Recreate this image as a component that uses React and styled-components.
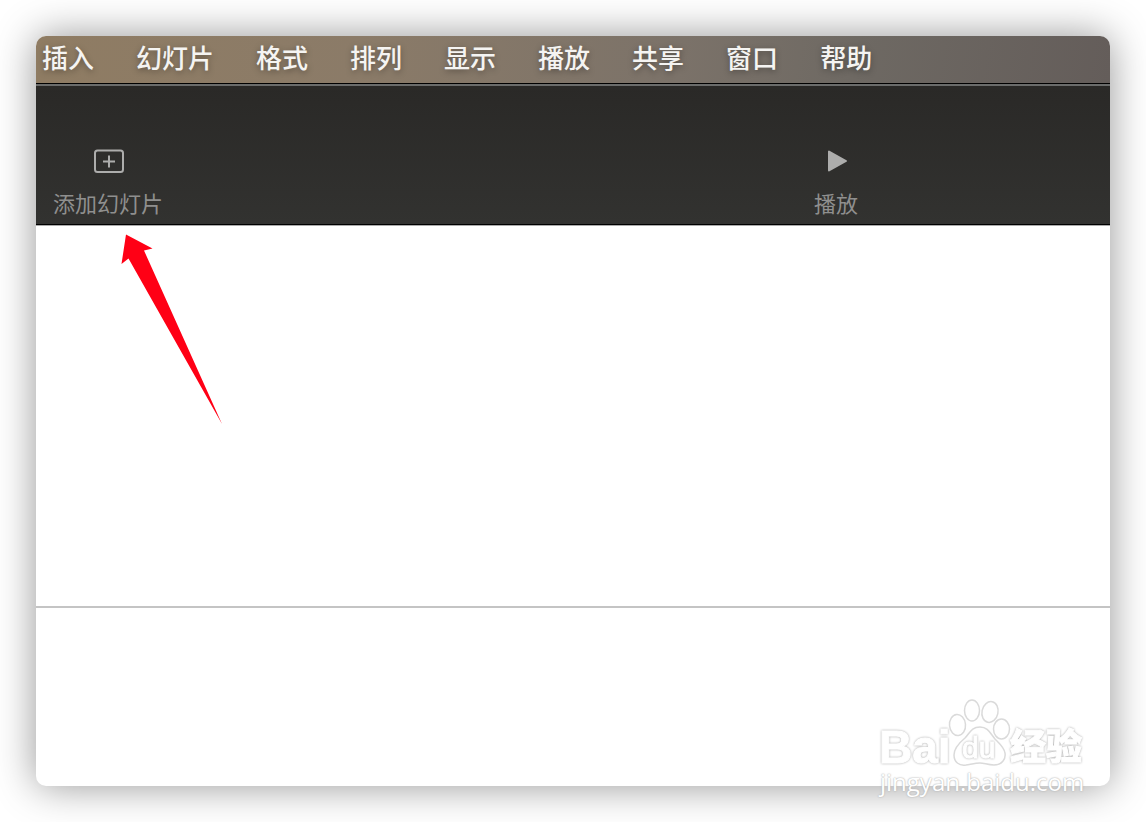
import React from "react";
import styled, { createGlobalStyle } from "styled-components";

const menus = ["插入", "幻灯片", "格式", "排列", "显示", "播放", "共享", "窗口", "帮助"];

const AddSlideIcon = () => (
  <svg width="32" height="26" viewBox="0 0 32 26" fill="none" stroke="#adadac" strokeWidth="2" aria-hidden="true">
    <rect x="3" y="2.5" width="28" height="21.500" rx="2.500" />
    <path d="M11 13.500H23M17 7.500V19.500" />
  </svg>
);

const PlayIcon = () => (
  <svg width="32" height="26" viewBox="0 0 32 26" fill="#adadac" stroke="#adadac" strokeWidth="2" strokeLinejoin="round" aria-hidden="true">
    <path d="M9 3.5V22.5L26 13Z" />
  </svg>
);

const PawLogo = () => (
  <Logo width="214" height="72" viewBox="-4 0 214 72">
    <g fill="#fff" stroke="#dadada" strokeWidth="1.5">
      <ellipse cx="77.500" cy="27" rx="8" ry="10.5" transform="rotate(-5 77.5 27)" />
      <ellipse cx="92" cy="12.500" rx="7.500" ry="10.500" />
      <ellipse cx="110" cy="14" rx="8" ry="10.500" transform="rotate(12 110 14)" />
      <ellipse cx="121.500" cy="31" rx="8" ry="10" />
      <path d="M100 29C91 29 90 35 85 40C79 45 74 50 74 57C74 64 79 68 86 67C92 66 96 65 100 65C104 65 108 67 114 67C122 67 126 61 125 55C124 49 119 45 115 41C110 35 108 29 100 29Z" />
    </g>
    <LogoText x="-1" y="65" $size={46} $weight={700}>Bai</LogoText>
    <LogoText x="82" y="60" $size={30} $weight={400}>du</LogoText>
    <LogoText x="130" y="62" $size={36} $weight={900}>经验</LogoText>
  </Logo>
);

const App = () => (
  <>
    <GlobalStyle />
    <Page>
      <Window>
        <MenuBar>
          {menus.map((name) => (
            <MenuButton key={name} type="button">
              {name}
            </MenuButton>
          ))}
        </MenuBar>
        <Toolbar>
          <ToolButton type="button">
            <AddSlideIcon />
            添加幻灯片
          </ToolButton>
          <ToolButton type="button">
            <PlayIcon />
            播放
          </ToolButton>
        </Toolbar>
        <Content>
          <Pointer viewBox="0 0 102 190" aria-hidden="true">
            <path d="M6 0.500L32.500 14.500L24 16.500L102 190L8.500 24.500L1.500 30Z" />
          </Pointer>
        </Content>
        <Notes />
        <Watermark>
          <PawLogo />
          <SiteName>jingyan.baidu.com</SiteName>
        </Watermark>
      </Window>
    </Page>
  </>
);

//CSS

const GlobalStyle = createGlobalStyle`
  * {
    box-sizing: border-box;
  }
  body {
    margin: 0;
    background: #fff;
    font-family: "Noto Sans CJK SC", sans-serif;
  }
  button {
    border: 0;
    padding: 0;
    background: none;
    font-family: inherit;
    white-space: nowrap;
    cursor: pointer;
  }
`;

const Page = styled.div`
  display: flex;
  min-height: 100vh;
  padding: 36px;
  overflow: hidden;
`;

const Window = styled.main`
  position: relative;
  display: flex;
  flex-direction: column;
  flex: 1;
  min-width: 0;
  border-radius: 10px;
  background: #fff;
  box-shadow: 0 0 40px rgba(0, 0, 0, 0.42);
`;

const MenuBar = styled.nav`
  display: flex;
  align-items: center;
  gap: 42px;
  height: 48px;
  padding: 0 6px 6px;
  border-bottom: 1px solid #000;
  border-radius: 10px 10px 0 0;
  background: linear-gradient(100deg, #8f7c63 0%, #8b7b68 30%, #7b7269 60%, #6e6963 76%, #645d5a 100%);
`;

const MenuButton = styled.button`
  color: #f5f4f2;
  font-size: 26px;
  font-weight: 500;
  line-height: 38px;
  text-shadow: 0 2px 6px rgba(0, 0, 0, 0.35);
`;

const Toolbar = styled.header`
  display: flex;
  justify-content: space-between;
  align-items: flex-end;
  height: 141px;
  padding: 0 252px 6px 17px;
  border-top: 2px solid #6b6c6b;
  border-bottom: 1px solid #000;
  background: linear-gradient(#2a2927, #323230);
`;

const ToolButton = styled.button`
  display: flex;
  flex-direction: column;
  align-items: center;
  gap: 12px;
  color: #8f8f8e;
  font-size: 22px;
  line-height: 32px;
`;

const Content = styled.section`
  position: relative;
  flex: 380 1 0;
  border-top: 1px solid #aaa;
  border-bottom: 2px solid #c4c4c4;
`;

const Notes = styled.section`
  flex: 178 1 0;
`;

const Pointer = styled.svg`
  position: absolute;
  top: 8px;
  left: 84px;
  width: 102px;
  height: 190px;
  fill: #ff0015;
`;

const Watermark = styled.div`
  position: absolute;
  right: 20px;
  bottom: -8px;
  display: flex;
  flex-direction: column;
  width: 214px;
`;

const Logo = styled.svg`
  overflow: visible;
`;

const LogoText = styled.text`
  font-family: "Liberation Sans", "Noto Sans CJK SC", sans-serif;
  font-size: ${(props) => props.$size}px;
  font-weight: ${(props) => props.$weight};
  fill: #fff;
  stroke: #fff;
  stroke-width: 1px;
  filter: drop-shadow(0 0 1px #aaa);
`;

const SiteName = styled.span`
  padding-left: 4px;
  color: #fff;
  font-family: "Open Sans", sans-serif;
  font-size: 24px;
  line-height: 24px;
  text-shadow: 0 0 2px #aaa, 0 0 1px #ccc;
`;

export default App;
